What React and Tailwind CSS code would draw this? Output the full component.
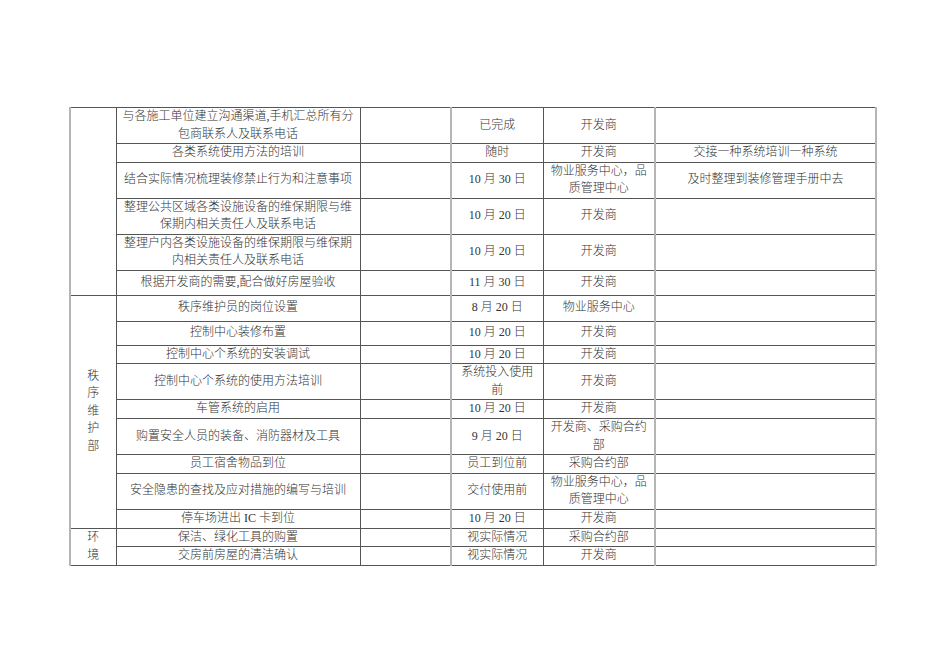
import React from 'react'

const rows = [
  { h: 36, task: ['与各施工单位建立沟通渠道,手机汇总所有分', '包商联系人及联系电话'], date: ['已完成'], who: ['开发商'], note: '' },
  { h: 18, task: ['各类系统使用方法的培训'], date: ['随时'], who: ['开发商'], note: '交接一种系统培训一种系统' },
  { h: 36, task: ['结合实际情况梳理装修禁止行为和注意事项'], date: ['10 月 30 日'], who: ['物业服务中心，品', '质管理中心'], note: '及时整理到装修管理手册中去' },
  { h: 36, task: ['整理公共区域各类设施设备的维保期限与维', '保期内相关责任人及联系电话'], date: ['10 月 20 日'], who: ['开发商'], note: '' },
  { h: 36, task: ['整理户内各类设施设备的维保期限与维保期', '内相关责任人及联系电话'], date: ['10 月 20 日'], who: ['开发商'], note: '' },
  { h: 25, task: ['根据开发商的需要,配合做好房屋验收'], date: ['11 月 30 日'], who: ['开发商'], note: '' },
  { h: 26, task: ['秩序维护员的岗位设置'], date: ['8 月 20 日'], who: ['物业服务中心'], note: '' },
  { h: 24, task: ['控制中心装修布置'], date: ['10 月 20 日'], who: ['开发商'], note: '' },
  { h: 18, task: ['控制中心个系统的安装调试'], date: ['10 月 20 日'], who: ['开发商'], note: '' },
  { h: 36, task: ['控制中心个系统的使用方法培训'], date: ['系统投入使用', '前'], who: ['开发商'], note: '' },
  { h: 19, task: ['车管系统的启用'], date: ['10 月 20 日'], who: ['开发商'], note: '' },
  { h: 36, task: ['购置安全人员的装备、消防器材及工具'], date: ['9 月 20 日'], who: ['开发商、采购合约', '部'], note: '' },
  { h: 18, task: ['员工宿舍物品到位'], date: ['员工到位前'], who: ['采购合约部'], note: '' },
  { h: 36, task: ['安全隐患的查找及应对措施的编写与培训'], date: ['交付使用前'], who: ['物业服务中心，品', '质管理中心'], note: '' },
  { h: 19, task: ['停车场进出 IC 卡到位'], date: ['10 月 20 日'], who: ['开发商'], note: '' },
  { h: 18, task: ['保洁、绿化工具的购置'], date: ['视实际情况'], who: ['采购合约部'], note: '' },
  { h: 18, task: ['交房前房屋的清洁确认'], date: ['视实际情况'], who: ['开发商'], note: '' },
]

// first column: merged section cells keyed by starting row
const groups = { 0: { span: 6, text: [] }, 6: { span: 9, text: ['秩', '序', '维', '护', '部'] }, 15: { span: 2, text: ['环', '境'] } }

function Lines({ items }) {
  return items.map((t, i) => (
    <div key={i} className="whitespace-nowrap">{t}</div>
  ))
}

const dark = 'border border-[#555]'
const light = 'border border-[#555] border-r-2 border-r-[#b5b5b5]'

export default function App() {
  return (
    <div className="w-[950px] h-[672px] bg-white pt-[107px] pl-[69px] font-['Liberation_Serif','Noto_Sans_CJK_SC',serif] font-light text-[12px] leading-[17.5px] text-[#333]">
      <table className="table-fixed border-collapse w-[806px] border-l-2 border-l-[#b5b5b5]">
        <colgroup>
          <col className="w-[46px]" />
          <col className="w-[244px]" />
          <col className="w-[91px]" />
          <col className="w-[92px]" />
          <col className="w-[112px]" />
          <col className="w-[221px]" />
        </colgroup>
        <tbody>
          {rows.map((r, i) => (
            <tr key={i} style={{ height: r.h }}>
              {groups[i] && (
                <td rowSpan={groups[i].span} className={`${dark} border-l-2 border-l-[#b5b5b5] text-center align-middle p-0`}>
                  <Lines items={groups[i].text} />
                </td>
              )}
              <td className={`${dark} text-center align-middle px-1 py-0`}>
                <Lines items={r.task} />
              </td>
              <td className={`${light} p-0`}></td>
              <td className={`${dark} text-center align-middle px-1 py-0`}>
                <Lines items={r.date} />
              </td>
              <td className={`${light} text-center align-middle px-1 py-0`}>
                <Lines items={r.who} />
              </td>
              <td className={`${light} text-center align-middle px-1 py-0`}>
                <Lines items={r.note ? [r.note] : []} />
              </td>
            </tr>
          ))}
        </tbody>
      </table>
    </div>
  )
}
